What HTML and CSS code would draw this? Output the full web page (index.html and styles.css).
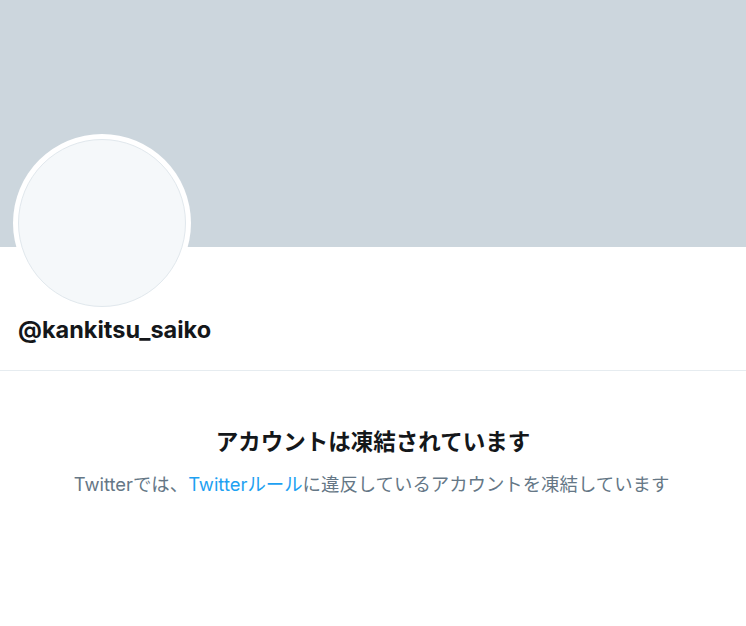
FILE: index.html
```html
<!DOCTYPE html>
<html lang="ja">
<head>
<meta charset="utf-8">
<link rel="stylesheet" href="styles.css">
</head>
<body>
<div class="banner"></div>
<div class="profile">
  <div class="avatar"><div class="avatar-inner"></div></div>
  <div class="username">@kankitsu_saiko</div>
</div>
<div class="message">
  <h1 class="title">アカウントは凍結されています</h1>
  <p class="desc">Twitterでは、<a class="link" href="#">Twitterルール</a>に違反しているアカウントを凍結しています</p>
</div>
</body>
</html>
```
FILE: styles.css
```css
html, body {
  margin: 0;
  padding: 0;
  background: #fff;
}
body {
  font-family: "Inter", "Noto Sans CJK JP", sans-serif;
  color: #14171a;
}
.banner {
  height: 247px;
  background: #ccd6dd;
}
.profile {
  display: flow-root;
  padding: 0 0 0 13px;
  border-bottom: 1px solid #e6ecf0;
  height: 124px;
  box-sizing: border-box;
}
.avatar {
  width: 178px;
  height: 178px;
  margin-top: -113px;
  border-radius: 50%;
  background: #fff;
  padding: 5px;
  box-sizing: border-box;
}
.avatar-inner {
  width: 100%;
  height: 100%;
  border-radius: 50%;
  background: #f5f8fa;
  box-sizing: border-box;
  border: 1px solid #e1e8ed;
}
.username {
  margin: 3px 0 0 5px;
  font-weight: 700;
  font-size: 23.5px;
  line-height: 30px;
  color: #14171a;
}
.message {
  text-align: center;
  padding-top: 56px;
}
.title {
  margin: 0;
  font-size: 22.5px;
  line-height: 30px;
  font-weight: 700;
  color: #14171a;
}
.desc {
  margin: 15px 0 0 -3px;
  font-size: 18.4px;
  line-height: 24px;
  color: #657786;
}
.link {
  color: #1da1f2;
  text-decoration: none;
}
```
